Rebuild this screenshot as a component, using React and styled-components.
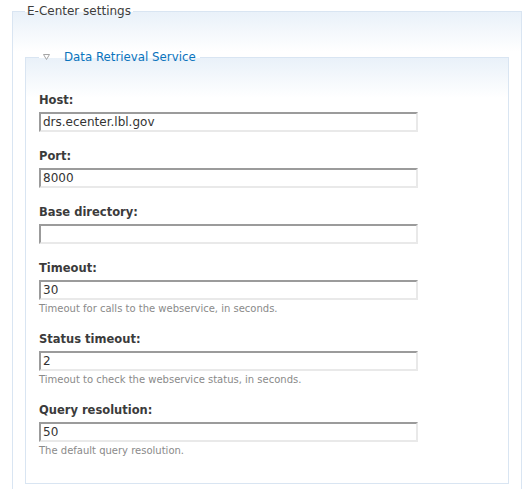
import React from 'react';
import styled, { createGlobalStyle } from 'styled-components';

const GlobalStyle = createGlobalStyle`
  body {
    margin: 0;
    background: #fff;
    font-family: "DejaVu Sans", Verdana, sans-serif;
    color: #3b3b3b;
  }
`;

const OuterFieldset = styled.fieldset`
  box-sizing: border-box;
  width: 510px;
  margin: 4px 0 0 12px;
  padding: 32px 12px 40px 12px;
  border: 1px solid #d9e5f2;
  background: linear-gradient(to bottom, #e9f1f9 0px, #ffffff 40px);
  min-width: 0;
`;

const OuterLegend = styled.legend`
  padding: 0 2px;
  font-size: 12px;
  line-height: 14px;
  color: #3d3d3d;
`;

const InnerFieldset = styled.fieldset`
  box-sizing: border-box;
  margin: 0;
  padding: 30px 13px 8px 13px;
  border: 1px solid #d9e5f2;
  background: linear-gradient(to bottom, #e9f1f9 0px, #ffffff 40px);
  min-width: 0;
`;

const InnerLegend = styled.legend`
  display: flex;
  align-items: center;
  padding: 0 4px;
  font-size: 11.8px;
  line-height: 14px;
  color: #0a74bd;
`;

const Toggle = styled.svg`
  width: 7px;
  height: 6px;
  margin-right: 14px;
  flex-shrink: 0;
`;

const FormItem = styled.div`
  margin-bottom: 18px;
`;

const Label = styled.label`
  display: block;
  font-size: 11.5px;
  line-height: 13px;
  font-weight: bold;
  color: #3b3b3b;
  margin-bottom: 5px;
`;

const TextInput = styled.input`
  display: block;
  box-sizing: border-box;
  width: 379px;
  height: 20px;
  margin: 0;
  padding: 0 2px;
  border-style: solid;
  border-width: 2px;
  border-color: #9b9b9b #e9e9e9 #e9e9e9 #9b9b9b;
  font-family: "DejaVu Sans", Verdana, sans-serif;
  font-size: 12px;
  color: #333;
  background: #fff;
  outline: none;
`;

const Description = styled.div`
  font-size: 10px;
  line-height: 13px;
  padding-top: 2px;
  color: #8a8a8a;
`;

const fields = [
  { label: 'Host:', value: 'drs.ecenter.lbl.gov' },
  { label: 'Port:', value: '8000' },
  { label: 'Base directory:', value: '' },
  { label: 'Timeout:', value: '30', description: 'Timeout for calls to the webservice, in seconds.' },
  { label: 'Status timeout:', value: '2', description: 'Timeout to check the webservice status, in seconds.' },
  { label: 'Query resolution:', value: '50', description: 'The default query resolution.' },
];

const App = () => {
  return (
    <>
      <GlobalStyle />
      <OuterFieldset>
        <OuterLegend>E-Center settings</OuterLegend>
        <InnerFieldset>
          <InnerLegend>
            <Toggle viewBox="0 0 7 6">
              <polygon points="0.5,0.5 6.5,0.5 3.5,5.5" fill="none" stroke="#a5a5a5" strokeWidth="1" />
            </Toggle>
            Data Retrieval Service
          </InnerLegend>
          {fields.map((f, i) => (
            <FormItem key={i}>
              <Label htmlFor={'f' + i}>{f.label}</Label>
              <TextInput id={'f' + i} type="text" defaultValue={f.value} />
              {f.description && <Description>{f.description}</Description>}
            </FormItem>
          ))}
        </InnerFieldset>
      </OuterFieldset>
    </>
  );
};

export default App;
